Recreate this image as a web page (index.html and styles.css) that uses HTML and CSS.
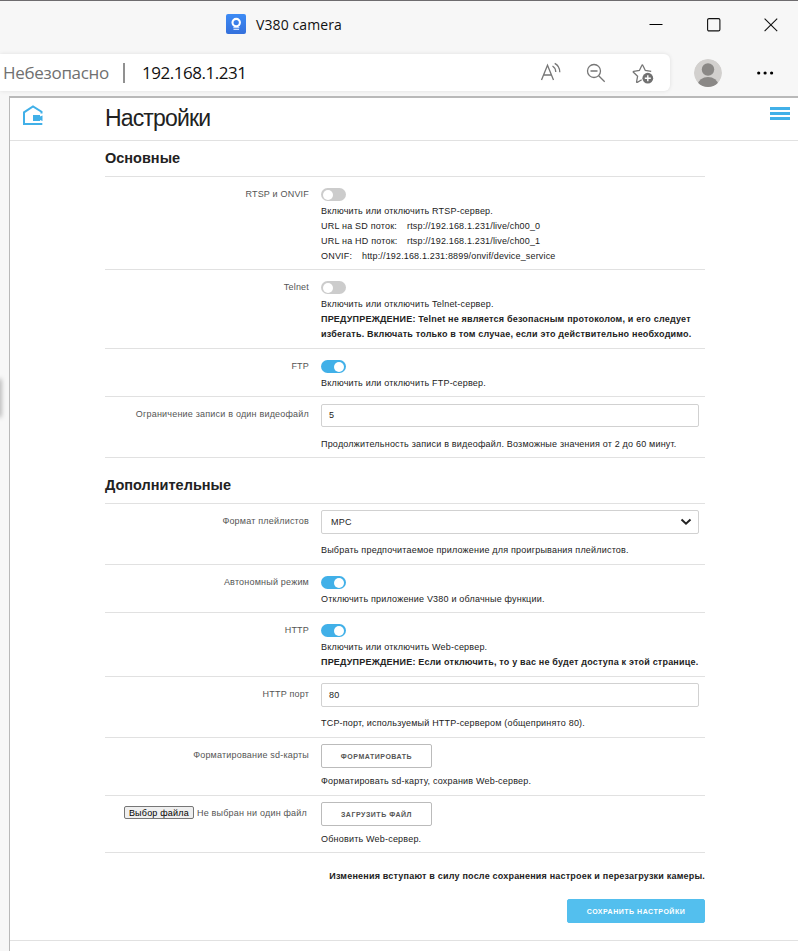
FILE: index.html
```html
<!DOCTYPE html>
<html lang="ru">
<head>
<meta charset="utf-8">
<title>V380 camera</title>
<link rel="stylesheet" href="styles.css">
</head>
<body>
<div class="titlebar">
  <div class="tab">
    <svg class="favicon" width="20" height="20" viewBox="0 0 20 20"><defs><linearGradient id="fav" x1="0" y1="0" x2="0" y2="1"><stop offset="0" stop-color="#3d8bf5"/><stop offset="1" stop-color="#3470dc"/></linearGradient></defs><rect width="20" height="20" rx="2" fill="url(#fav)"/><circle cx="10.2" cy="8.6" r="3.7" fill="none" stroke="#fff" stroke-width="2.1"/><path d="M7.3 13.7h6M7.5 15.4h5.6" stroke="#dceaff" stroke-width="1"/></svg>
    <span class="tab-title">V380 camera</span>
  </div>
  <div class="winctl">
    <svg width="14" height="14" viewBox="0 0 14 14"><path d="M.5 6.5h13" stroke="#000"/></svg>
    <svg width="14" height="14" viewBox="0 0 14 14"><rect x=".6" y=".6" width="12.3" height="12.3" rx="1.4" fill="none" stroke="#111" stroke-width="1.1"/></svg>
    <svg width="14" height="14" viewBox="0 0 14 14"><path d="M.6.6l12.6 12.6M13.2.6.6 13.2" stroke="#111" stroke-width="1.1"/></svg>
  </div>
</div>
<div class="toolbar">
  <div class="address">
    <span class="insecure">Небезопасно</span>
    <span class="sep"></span>
    <span class="url">192.168.1.231</span>
    <div class="actions">
      <svg width="22" height="22" viewBox="0 0 22 22" fill="none" stroke="#767676" stroke-width="1.3"><path d="M1.500 18 7.500 3.200 13.500 18M3.700 13h7.700M12.500 4q3 1.800 3.300 6M14.700 1.300q5 2.500 5.100 8.900"/></svg>
      <svg width="22" height="22" viewBox="0 0 22 22" fill="none" stroke="#767676" stroke-width="1.3"><circle cx="9" cy="9" r="6.500"/><path d="M5.500 9h7M13.700 13.700l6 6"/></svg>
      <svg width="24" height="24" viewBox="0 0 24 24"><path d="M11.700 18.800 7.300 21.300c-.6.2-.8-.1-.7-.6l1-5.400-4.200-4.100c-.4-.4-.2-.8.3-.9l5.700-.8 2.500-5.200c.2-.5.7-.5.9 0l2.500 5.200 5.900.8" fill="none" stroke="#767676" stroke-width="1.300"/><circle cx="17.800" cy="17.200" r="5.400" fill="#707070"/><path d="M17.800 14.200v6M14.800 17.200h6" stroke="#fff" stroke-width="1.400"/></svg>
    </div>
  </div>
  <svg class="avatar" width="28" height="28" viewBox="0 0 28 28"><defs><clipPath id="av"><circle cx="14" cy="14" r="14"/></clipPath></defs><g clip-path="url(#av)"><circle cx="14" cy="14" r="14" fill="#d2d0ce"/><circle cx="14" cy="10.500" r="6.200" fill="#8a8886"/><ellipse cx="14" cy="25.500" rx="10" ry="7.500" fill="#8a8886"/></g></svg>
  <svg class="dots" width="18" height="4" viewBox="0 0 18 4"><circle cx="1.700" cy="2" r="1.600"/><circle cx="8.100" cy="2" r="1.600"/><circle cx="14.600" cy="2" r="1.600"/></svg>
</div>
<div class="window-body">
<div class="gutter"><span class="edge"></span></div>
<div class="viewport">
  <header class="page-head">
    <svg class="home" width="22" height="22" viewBox="0 0 22 22"><path d="M19.500 8.500V6.700L11 1.500 2 7.300V19h18.300" fill="none" stroke="#41b0e8" stroke-width="2"/><path d="M11 10h7v1.500l2.500-1v5.500L18 15v1h-7z" fill="#41b0e8"/></svg>
    <h1>Настройки</h1>
    <span class="burger"></span>
  </header>
  <main>
    <h2 class="first">Основные</h2>
    <div class="row h93"><label>RTSP и ONVIF</label><div class="field toggled"><i class="switch"></i>
      <p>Включить или отключить RTSP-сервер.</p>
      <p><span class="key">URL на SD поток:</span><span class="link">rtsp://192.168.1.231/live/ch00_0</span></p>
      <p><span class="key">URL на HD поток:</span><span class="link">rtsp://192.168.1.231/live/ch00_1</span></p>
      <p><span class="key onvif">ONVIF:</span><span class="link">http://192.168.1.231:8899/onvif/device_service</span></p></div></div>
    <div class="row h79"><label>Telnet</label><div class="field toggled"><i class="switch"></i>
      <p>Включить или отключить Telnet-сервер.</p>
      <p><b>ПРЕДУПРЕЖДЕНИЕ: Telnet не является безопасным протоколом, и его следует</b></p>
      <p><b>избегать. Включать только в том случае, если это действительно необходимо.</b></p></div></div>
    <div class="row h48"><label>FTP</label><div class="field toggled"><i class="switch on"></i>
      <p>Включить или отключить FTP-сервер.</p></div></div>
    <div class="row h61"><label>Ограничение записи в один видеофайл</label><div class="field limit"><div class="input">5</div>
      <p>Продолжительность записи в видеофайл. Возможные значения от 2 до 60 минут.</p></div></div>
    <h2>Дополнительные</h2>
    <div class="row h61"><label>Формат плейлистов</label><div class="field"><div class="input select">MPC<svg width="12" height="8" viewBox="0 0 12 8"><path d="M1.500 1.500 6 5.700l4.500-4.200" fill="none" stroke="#222" stroke-width="2"/></svg></div>
      <p>Выбрать предпочитаемое приложение для проигрывания плейлистов.</p></div></div>
    <div class="row h48"><label>Автономный режим</label><div class="field toggled"><i class="switch on"></i>
      <p>Отключить приложение V380 и облачные функции.</p></div></div>
    <div class="row h64"><label>HTTP</label><div class="field toggled"><i class="switch on"></i>
      <p>Включить или отключить Web-сервер.</p>
      <p><b>ПРЕДУПРЕЖДЕНИЕ: Если отключить, то у вас не будет доступа к этой странице.</b></p></div></div>
    <div class="row h61"><label>HTTP порт</label><div class="field"><div class="input">80</div>
      <p>TCP-порт, используемый HTTP-сервером (общепринято 80).</p></div></div>
    <div class="row h58"><label>Форматирование sd-карты</label><div class="field"><button class="btn">Форматировать</button>
      <p>Форматировать sd-карту, сохранив Web-сервер.</p></div></div>
    <div class="row h57"><label class="file"><span class="pick">Выбор файла</span><span>Не выбран ни один файл</span></label><div class="field"><button class="btn">Загрузить файл</button>
      <p>Обновить Web-сервер.</p></div></div>
    <div class="save-area"><b>Изменения вступают в силу после сохранения настроек и перезагрузки камеры.</b><button class="btn primary">Сохранить настройки</button></div>
  </main>
  <footer></footer>
</div>
</div>
</body>
</html>
```
FILE: styles.css
```css
* { box-sizing: border-box; }
body { margin: 0; width: 798px; height: 951px; overflow: hidden; background: #f7f7f7; border-top: 1px solid #6e6c6f; font-family: "Liberation Sans", Arial, sans-serif; color: #222; }
svg { display: block; flex: none; }
h1, h2, p { margin: 0; font-weight: normal; }
span, b { white-space: nowrap; }

.titlebar { height: 53px; display: flex; justify-content: space-between; padding: 0 20px 0 226px; }
.tab { display: flex; gap: 10px; height: 46px; align-items: center; }
.tab-title { font: 14px/20px "Open Sans", sans-serif; letter-spacing: .1px; color: #111; padding-top: 1px; }
.winctl { display: flex; gap: 43.500px; height: 47px; align-items: center; }

.toolbar { height: 42px; display: flex; align-items: flex-start; }
.address { width: 670px; height: 37px; background: #fff; border-radius: 0 6px 6px 0; box-shadow: 0 0 4px rgba(0, 0, 0, .1); display: flex; align-items: center; padding-left: 3px; }
.insecure, .url { font: 17px/24px "Open Sans", sans-serif; color: #707070; width: 106px; letter-spacing: -.3px; }
.url { color: #111; letter-spacing: -.46px; }
.sep { width: 2px; height: 20px; background: #919191; margin: 0 17px 0 14px; }
.actions { margin-left: auto; display: flex; gap: 23px; align-items: center; padding-right: 16px; }
.avatar { margin: 5px 0 0 24px; }
.dots { margin: 17px 0 0 35px; }

.window-body { display: flex; height: 855px; }
.gutter { width: 9px; overflow: hidden; padding-top: 284px; }
.edge { display: block; width: 2px; height: 36px; margin-left: -2px; box-shadow: 0 0 5px 1px rgba(0, 0, 0, .35); }
.viewport { flex: 1; background: #fff; border-left: 1px solid #b9b9b9; border-top: 2px solid #b9b9b9; }
.page-head { height: 43px; border-bottom: 1px solid #e1e1e1; display: flex; padding-right: 8px; }
.home { margin: 7px 0 0 12px; }
h1 { font-size: 23px; line-height: 40px; margin-left: 61px; letter-spacing: -.85px; }
.burger { margin: 9px 0 0 auto; width: 20px; height: 13px; background: linear-gradient(#41b0e8 3px, #fff 3px 5px, #41b0e8 5px 8px, #fff 8px 10px, #41b0e8 10px); }

main { width: 600px; margin-left: 95px; letter-spacing: .2px; }
h2 { height: 46px; border-bottom: 1px solid #e1e1e1; font-size: 14.500px; letter-spacing: 0; font-weight: bold; line-height: 20px; padding-top: 17px; }
h2.first { height: 36px; padding-top: 7px; }
.row { display: flex; gap: 12px; border-bottom: 1px solid #e1e1e1; font-size: 9px; line-height: 15px; }
.h93 { height: 93px; }
.h79 { height: 79px; }
.h64 { height: 64px; }
.h61 { height: 61px; }
.h58 { height: 58px; }
.h57 { height: 57px; }
.h48 { height: 48px; }
label { width: 204px; padding-top: 10px; text-align: right; color: #555; }
.field { width: 378px; padding-top: 6px; }
.limit { padding-top: 7px; }
.toggled { padding-top: 11px; }
.switch { display: block; width: 25px; height: 13px; border-radius: 7px; background: #ccc; margin-bottom: 3px; padding: 1.500px 2px; }
.switch::before { content: ""; display: block; width: 10px; height: 10px; border-radius: 50%; background: #fff; }
.switch.on { background: #41b0e8; }
.switch.on::before { margin-left: auto; }
.key { display: inline-block; width: 86px; }
.key.onvif { width: 41px; }
.link { letter-spacing: .16px; }
.input { height: 24px; border: 1px solid #d1d1d1; border-radius: 2px; padding: 0 7px; line-height: 22px; margin-bottom: 9px; }
.limit .input { height: 23px; margin-bottom: 10px; line-height: 21px; }
.select { display: flex; justify-content: space-between; align-items: center; padding: 0 6px 0 9px; }
.btn { display: flex; align-items: center; justify-content: center; width: 111px; height: 24px; padding: 1px 0 0; border: 1px solid #bbb; border-radius: 2px; background: #fff; color: #555; font: bold 7px/21px "Liberation Sans", sans-serif; letter-spacing: .52px; text-transform: uppercase; margin-bottom: 6px; }
.file { display: flex; justify-content: flex-end; gap: 3px; padding-right: 2px; }
.pick { height: 13px; line-height: 12px; padding: 0 4px; border: 1px solid #767676; border-radius: 2px; background: #efefef; color: #000; }
.save-area { height: 87px; display: flex; flex-direction: column; align-items: flex-end; font-size: 9px; line-height: 15px; padding-top: 16px; }
.primary { width: 138px; background: #53bfee; border-color: #53bfee; color: #fff; margin-top: 15px; margin-bottom: 0; }
footer { border-top: 1px solid #e1e1e1; }
```
